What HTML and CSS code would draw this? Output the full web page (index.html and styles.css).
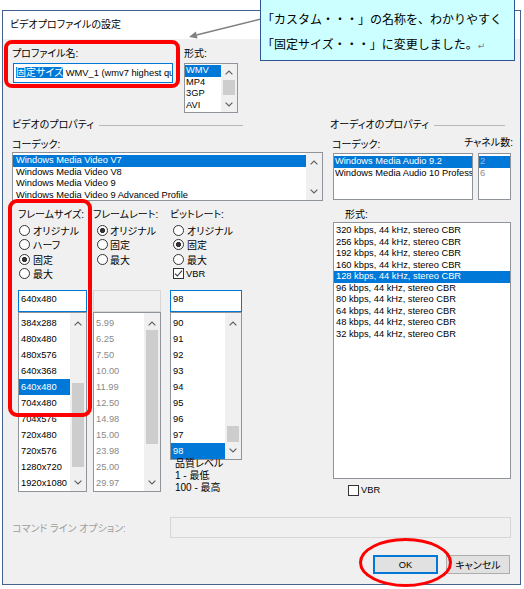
FILE: index.html
```html
<!DOCTYPE html>
<html lang="ja">
<head>
<meta charset="utf-8">
<title>ビデオプロファイルの設定</title>
<link rel="stylesheet" href="styles.css">
</head>
<body>
<div class="window">
  <div class="titlebar">ビデオプロファイルの設定</div>
  <div class="content">
    <div class="row-top">
      <div class="name-col">
        <div class="label">プロファイル名:</div>
        <div class="textbox focus name-box lat"><span class="ja seltext">固定サイズ</span> WMV_1 (wmv7 highest quality)</div>
      </div>
      <div class="format-col">
        <div class="label">形式:</div>
        <div class="listbox format-list">
          <div class="items small lat pad1">
            <div class="item sel">WMV</div>
            <div class="item">MP4</div>
            <div class="item">3GP</div>
            <div class="item">AVI</div>
          </div>
          <div class="scrollbar">
            <div class="arr a16"><svg width="8" height="5" viewBox="0 0 8 5"><polyline points="0.6,4.4 4,1 7.4,4.4" fill="none" stroke="#606060" stroke-width="1.2"/></svg></div>
            <div class="track"><div class="thumb" style="margin-top:0;height:15px"></div></div>
            <div class="arr a16"><svg width="8" height="5" viewBox="0 0 8 5"><polyline points="0.6,0.6 4,4 7.4,0.6" fill="none" stroke="#606060" stroke-width="1.2"/></svg></div>
          </div>
        </div>
      </div>
    </div>

    <div class="groups">
      <div class="video">
        <div class="group-title vt"><span>ビデオのプロパティ</span><i class="rule"></i></div>
        <div class="label mt8">コーデック:</div>
        <div class="listbox vcodec">
          <div class="items small lat pad2">
            <div class="item sel">Windows Media Video V7</div>
            <div class="item">Windows Media Video V8</div>
            <div class="item">Windows Media Video 9</div>
            <div class="item">Windows Media Video 9 Advanced Profile</div>
          </div>
          <div class="scrollbar">
            <div class="arr a18"><svg width="8" height="5" viewBox="0 0 8 5"><polyline points="0.6,4.4 4,1 7.4,4.4" fill="none" stroke="#606060" stroke-width="1.2"/></svg></div>
            <div class="track"></div>
            <div class="arr a18"><svg width="8" height="5" viewBox="0 0 8 5"><polyline points="0.6,0.6 4,4 7.4,0.6" fill="none" stroke="#606060" stroke-width="1.2"/></svg></div>
          </div>
        </div>

        <div class="settings">
          <div class="setcol fsize">
            <div class="label">フレームサイズ:</div>
            <div class="radios r1">
              <div class="opt"><span class="radio"></span><span>オリジナル</span></div>
              <div class="opt"><span class="radio"></span><span>ハーフ</span></div>
              <div class="opt"><span class="radio on"></span><span>固定</span></div>
              <div class="opt"><span class="radio"></span><span>最大</span></div>
            </div>
            <div class="textbox focus combo lat">640x480</div>
            <div class="listbox biglist h180">
              <div class="items big lat pad2">
                <div class="item">384x288</div>
                <div class="item">480x480</div>
                <div class="item">480x576</div>
                <div class="item">640x368</div>
                <div class="item sel">640x480</div>
                <div class="item">704x480</div>
                <div class="item">704x576</div>
                <div class="item">720x480</div>
                <div class="item">720x576</div>
                <div class="item">1280x720</div>
                <div class="item">1920x1080</div>
              </div>
              <div class="scrollbar">
                <div class="arr a17up"><svg width="8" height="5" viewBox="0 0 8 5"><polyline points="0.6,4.4 4,1 7.4,4.4" fill="none" stroke="#606060" stroke-width="1.2"/></svg></div>
                <div class="track"><div class="thumb" style="margin-top:53px;height:84px"></div></div>
                <div class="arr a17"><svg width="8" height="5" viewBox="0 0 8 5"><polyline points="0.6,0.6 4,4 7.4,0.6" fill="none" stroke="#606060" stroke-width="1.2"/></svg></div>
              </div>
            </div>
          </div>

          <div class="setcol frate">
            <div class="label">フレームレート:</div>
            <div class="radios r2">
              <div class="opt"><span class="radio on"></span><span>オリジナル</span></div>
              <div class="opt"><span class="radio"></span><span>固定</span></div>
              <div class="opt"><span class="radio"></span><span>最大</span></div>
            </div>
            <div class="textbox disabled combo lat"></div>
            <div class="listbox biglist h180">
              <div class="items big lat pad2 dim">
                <div class="item">5.99</div>
                <div class="item">6.25</div>
                <div class="item">7.50</div>
                <div class="item">10.00</div>
                <div class="item">11.99</div>
                <div class="item">12.50</div>
                <div class="item">14.98</div>
                <div class="item">15.00</div>
                <div class="item">23.98</div>
                <div class="item">25.00</div>
                <div class="item">29.97</div>
              </div>
              <div class="scrollbar">
                <div class="arr a17up"><svg width="8" height="5" viewBox="0 0 8 5"><polyline points="0.6,4.4 4,1 7.4,4.4" fill="none" stroke="#606060" stroke-width="1.2"/></svg></div>
                <div class="track"><div class="thumb" style="margin-top:0;height:114px"></div></div>
                <div class="arr a17"><svg width="8" height="5" viewBox="0 0 8 5"><polyline points="0.6,0.6 4,4 7.4,0.6" fill="none" stroke="#606060" stroke-width="1.2"/></svg></div>
              </div>
            </div>
          </div>

          <div class="setcol brate">
            <div class="label">ビットレート:</div>
            <div class="radios r3">
              <div class="opt"><span class="radio"></span><span>オリジナル</span></div>
              <div class="opt"><span class="radio on"></span><span>固定</span></div>
              <div class="opt"><span class="radio"></span><span>最大</span></div>
              <div class="opt chk"><span class="check on"><svg width="9" height="9" viewBox="0 0 9 9"><polyline points="1,4.6 3.4,7 8,1.6" fill="none" stroke="#333" stroke-width="1.1"/></svg></span><span class="lat">VBR</span></div>
            </div>
            <div class="textbox focus combo lat">98</div>
            <div class="listbox biglist h148">
              <div class="items big lat pad2">
                <div class="item">90</div>
                <div class="item">91</div>
                <div class="item">92</div>
                <div class="item">93</div>
                <div class="item">94</div>
                <div class="item">95</div>
                <div class="item">96</div>
                <div class="item">97</div>
                <div class="item sel">98</div>
              </div>
              <div class="scrollbar">
                <div class="arr a17up"><svg width="8" height="5" viewBox="0 0 8 5"><polyline points="0.6,4.4 4,1 7.4,4.4" fill="none" stroke="#606060" stroke-width="1.2"/></svg></div>
                <div class="track"><div class="thumb" style="margin-top:96px;height:16px"></div></div>
                <div class="arr a17"><svg width="8" height="5" viewBox="0 0 8 5"><polyline points="0.6,0.6 4,4 7.4,0.6" fill="none" stroke="#606060" stroke-width="1.2"/></svg></div>
              </div>
            </div>
            <div class="quality">
              <div>品質レベル</div>
              <div>1 - 最低</div>
              <div>100 - 最高</div>
            </div>
          </div>
        </div>
      </div>

      <div class="audio">
        <div class="group-title at"><span>オーディオのプロパティ</span><i class="rule"></i></div>
        <div class="alabels mt8">
          <div class="label acodec-label">コーデック:</div>
          <div class="label chan-label">チャネル数:</div>
        </div>
        <div class="alists">
          <div class="listbox acodec">
            <div class="items small lat pad2">
              <div class="item sel">Windows Media Audio 9.2</div>
              <div class="item">Windows Media Audio 10 Professional</div>
            </div>
          </div>
          <div class="listbox chan">
            <div class="items small lat pad2">
              <div class="item sel inactive">2</div>
              <div class="item dimtext">6</div>
            </div>
          </div>
        </div>
        <div class="label aformat-label">形式:</div>
        <div class="listbox aformat">
          <div class="items small lat pad2">
            <div class="item">320 kbps, 44 kHz, stereo CBR</div>
            <div class="item">256 kbps, 44 kHz, stereo CBR</div>
            <div class="item">192 kbps, 44 kHz, stereo CBR</div>
            <div class="item">160 kbps, 44 kHz, stereo CBR</div>
            <div class="item sel">128 kbps, 44 kHz, stereo CBR</div>
            <div class="item">96 kbps, 44 kHz, stereo CBR</div>
            <div class="item">80 kbps, 44 kHz, stereo CBR</div>
            <div class="item">64 kbps, 44 kHz, stereo CBR</div>
            <div class="item">48 kbps, 44 kHz, stereo CBR</div>
            <div class="item">32 kbps, 44 kHz, stereo CBR</div>
          </div>
        </div>
        <div class="opt avbr"><span class="check"></span><span class="lat">VBR</span></div>
      </div>
    </div>

    <div class="cmdline">
      <div class="cmd-label">コマンド ライン オプション:</div>
      <div class="textbox disabled cmd-box"></div>
    </div>

    <div class="buttons">
      <div class="btn default lat">OK</div>
      <div class="btn">キャンセル</div>
    </div>
  </div>
</div>

<svg class="overlay" width="524" height="589" viewBox="0 0 524 589">
  <line x1="261" y1="19" x2="196.5" y2="35" stroke="#808080" stroke-width="1.3"/>
  <polygon points="189,37 197.6,38.6 195.8,31.4" fill="#808080"/>
  <rect x="6" y="42" width="172" height="44" rx="6" fill="none" stroke="#ff0000" stroke-width="4"/>
  <rect x="10" y="201" width="80" height="214" rx="7" fill="none" stroke="#ff0000" stroke-width="4"/>
  <ellipse cx="405.5" cy="562.5" rx="45" ry="23" fill="none" stroke="#ff0000" stroke-width="3"/>
</svg>

<div class="callout">
  <div>「カスタム・・・」の名称を、わかりやすく</div>
  <div>「固定サイズ・・・」に変更しました。<span class="ret">↵</span></div>
</div>
</body>
</html>
```

FILE: styles.css
```css
* { box-sizing: border-box; }
html, body { margin: 0; padding: 0; }
body {
  width: 524px;
  height: 589px;
  position: relative;
  overflow: hidden;
  background: #ffffff;
  color: #000;
  font-family: "Liberation Sans", "Noto Sans CJK JP", sans-serif;
  font-size: 10px;
  font-feature-settings: "palt";
}

.window {
  margin: 10px 0 0 2px;
  width: 519px;
  height: 575px;
  border: 1px solid #44628f;
  background: #f0f0f0;
}
.titlebar {
  height: 28px;
  line-height: 28px;
  padding-left: 7px;
  background: #ffffff;
}
.content { padding: 9px 0 0 9px; }

.lat { font-size: 9.3px; }
.ja { font-size: 10px; }

.label { height: 12px; line-height: 12px; white-space: nowrap; }
.mt8 { margin-top: 8px; }

/* top row */
.row-top { display: flex; height: 65px; }
.name-col { width: 161px; }
.name-col .label { margin-bottom: 3px; }
.format-col { margin-left: 11px; }
.format-col .label { margin-bottom: 3px; }

.textbox {
  height: 20px;
  border: 1px solid #7a7a7a;
  background: #ffffff;
  line-height: 18px;
  padding-left: 2px;
  white-space: nowrap;
  overflow: hidden;
}
.textbox.focus { border-color: #0078d7; }
.textbox.disabled { background: #f0f0f0; border-color: #d6d6d6; }
.name-box { margin-left: 1px; width: 160px; }
.seltext { background: #0078d7; color: #fff; }

.listbox {
  display: flex;
  border: 1px solid #8f939a;
  background: #ffffff;
  overflow: hidden;
}
.items { flex: 1; min-width: 0; overflow: hidden; }
.pad1 { padding-top: 1px; }
.pad2 { padding-top: 2px; }
.item { white-space: nowrap; overflow: hidden; padding-left: 2px; }
.small .item { height: 11.5px; line-height: 11.5px; }
.big .item { height: 16px; line-height: 16px; }
.item.sel { background: #0078d7; color: #fff; }
.item.inactive { color: #9fb8dc; }
.dim .item, .dimtext { color: #8a8a8a; }

.scrollbar {
  width: 16px;
  flex: none;
  display: flex;
  flex-direction: column;
  background: #f0f0f0;
}
.arr { display: flex; align-items: center; justify-content: center; flex: none; }
.arr svg { display: block; }
.a16 { height: 16px; }
.a18 { height: 18px; }
.a17 { height: 17px; }
.a17up { height: 17px; padding-top: 3px; }
.track { flex: 1; display: flex; justify-content: center; align-items: flex-start; }
.thumb { width: 12px; background: #cdcdcd; flex: none; }

.format-list { width: 54px; height: 50px; }
.format-list .item { padding-left: 1px; }

/* groups */
.groups { display: flex; margin-top: 6px; height: 381px; }
.video { width: 311px; }
.audio { width: 183px; margin-left: 7px; }

.group-title { display: flex; align-items: center; height: 12px; line-height: 12px; white-space: nowrap; }
.group-title .rule { flex: 1; height: 1px; background: #b9b9b9; margin-left: 5px; }
.vt { width: 231px; }
.at { width: 175px; }

.vcodec { margin-top: 1px; width: 311px; height: 49px; }
.vcodec .item { padding-left: 3px; }

.settings { display: flex; margin-top: 8px; padding-left: 6px; }
.setcol { display: flex; flex-direction: column; }
.fsize { width: 69px; }
.frate { width: 68px; margin-left: 6px; }
.brate { width: 72px; margin-left: 9px; }

.radios { margin-top: 2px; height: 67px; }
.opt { display: flex; align-items: center; height: 14.5px; white-space: nowrap; }
.radio {
  width: 11px;
  height: 11px;
  flex: none;
  border: 1px solid #333;
  border-radius: 50%;
  background: #fff;
  margin-right: 3px;
}
.radio.on { background: radial-gradient(circle, #333 0 2.4px, #fff 2.9px); }
.r1 .radio { margin-left: 1px; }
.r2 .radio { margin-left: 4px; margin-right: 2px; }
.r3 .radio { margin-left: 3px; }
.check {
  width: 11px;
  height: 11px;
  flex: none;
  border: 1px solid #333;
  background: #fff;
  margin-right: 2px;
  display: flex;
  align-items: center;
  justify-content: center;
}
.check svg { display: block; }
.r3 .chk .check { margin-left: 3px; }

.combo { height: 22px; line-height: 17px; }
.biglist { margin-top: 0; }
.h180 { height: 180px; }
.h148 { height: 148px; }
.quality { margin-top: -2px; padding-left: 5px; line-height: 12px; white-space: nowrap; }

/* audio */
.alabels { display: flex; justify-content: space-between; }
.acodec-label { margin-left: 2px; }
.chan-label { margin-top: -2px; }
.alists { display: flex; margin-top: 2px; }
.acodec { margin-left: 3px; width: 140px; height: 47px; }
.acodec .item { padding-left: 1px; }
.chan { margin-left: 5px; width: 33px; height: 47px; }
.chan .item { padding-left: 1px; }
.aformat-label { margin-top: 9px; margin-left: 15px; }
.aformat { margin-top: 1px; margin-left: 3px; width: 178px; height: 257px; }
.avbr { margin-top: 5px; margin-left: 18px; height: 12px; }

/* command line */
.cmdline { display: flex; align-items: center; margin-top: 17px; height: 21px; }
.cmd-label { width: 158px; color: #a0a0a0; white-space: nowrap; }
.cmd-box { width: 341px; height: 21px; }

.buttons { display: flex; justify-content: flex-end; gap: 8px; margin-top: 17px; padding-right: 10px; }
.btn {
  height: 19px;
  width: 64px;
  border: 1px solid #adadad;
  background: #e1e1e1;
  display: flex;
  align-items: center;
  justify-content: center;
  white-space: nowrap;
}
.btn.default { width: 65px; border: 2px solid #0078d7; }

/* annotations */
.overlay { position: absolute; left: 0; top: 0; }
.callout {
  position: absolute;
  left: 260px;
  top: -1px;
  width: 255px;
  height: 62px;
  border: 1px solid #2f5597;
  background: #ccffff;
  padding: 6px 0 0 1px;
  font-family: "Noto Sans CJK JP", sans-serif;
  font-feature-settings: normal;
  font-size: 12px;
  line-height: 25px;
  white-space: nowrap;
}
.ret { color: #808080; font-size: 9px; font-family: "DejaVu Sans", sans-serif; }
```
